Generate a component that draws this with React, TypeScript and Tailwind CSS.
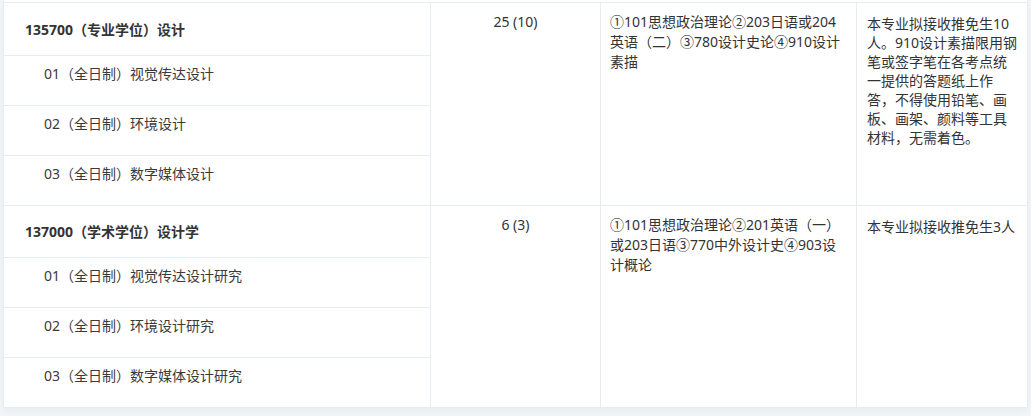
import React from "react";

const B = "border-[#e6ecf1]";

type Group = {
  title: string;
  subs: string[];
  count: string;
  exam: string[];
  note: string[];
  headerH: string;
};

const groups: Group[] = [
  {
    title: "135700（专业学位）设计",
    subs: ["01（全日制）视觉传达设计", "02（全日制）环境设计", "03（全日制）数字媒体设计"],
    count: "25 (10)",
    exam: ["①101思想政治理论②203日语或204", "英语（二）③780设计史论④910设计", "素描"],
    note: [
      "本专业拟接收推免生10",
      "人。910设计素描限用钢",
      "笔或签字笔在各考点统",
      "一提供的答题纸上作",
      "答，不得使用铅笔、画",
      "板、画架、颜料等工具",
      "材料，无需着色。",
    ],
    headerH: "h-[53px]",
  },
  {
    title: "137000（学术学位）设计学",
    subs: ["01（全日制）视觉传达设计研究", "02（全日制）环境设计研究", "03（全日制）数字媒体设计研究"],
    count: "6 (3)",
    exam: ["①101思想政治理论②201英语（一）", "或203日语③770中外设计史④903设", "计概论"],
    note: ["本专业拟接收推免生3人"],
    headerH: "h-[52px]",
  },
];

function GroupRow({ g }: { g: Group }) {
  return (
    <div className={`flex border-b ${B}`}>
      <div className={`w-[427px] border-r ${B} flex flex-col`}>
        <div className={`${g.headerH} border-b ${B} flex items-center pl-[21px] font-bold text-[14px] text-[#333]`}>
          {g.title}
        </div>
        {g.subs.map((s, i) => (
          <div
            key={i}
            className={`${i < 2 ? `h-[50px] border-b ${B}` : "h-[49px]"} pl-[40px] pt-[8px] leading-[20px] text-[14px] text-[#3a3a3a]`}
          >
            {s}
          </div>
        ))}
      </div>
      <div className={`w-[170px] border-r ${B} text-center pt-[9px] leading-[20px] text-[14px] text-[#333]`}>
        {g.count}
      </div>
      <div className={`w-[256px] border-r ${B} pl-[9px] pt-[9px] leading-[20px] text-[14px] text-[#333]`}>
        {g.exam.map((l, i) => (
          <div key={i} className="whitespace-nowrap">
            {l}
          </div>
        ))}
      </div>
      <div className={`w-[171px] border-r ${B} pl-[10px] pt-[11px] leading-[19px] text-[14px] text-[#333]`}>
        {g.note.map((l, i) => (
          <div key={i} className="whitespace-nowrap">
            {l}
          </div>
        ))}
      </div>
    </div>
  );
}

export default function App() {
  return (
    <div className="w-[1031px] h-[416px] overflow-hidden bg-[#f3f6f9] font-['Noto_Sans','Noto_Sans_CJK_SC',sans-serif]">
      <div className={`ml-[3px] w-[1025px] bg-white border-l ${B} shadow-[0_3px_8px_rgba(30,60,90,0.06)]`}>
        <div className={`h-[2px] border-r ${B}`} />
        <div className={`border-t ${B}`}>
          {groups.map((g, i) => (
            <GroupRow key={i} g={g} />
          ))}
        </div>
      </div>
    </div>
  );
}
